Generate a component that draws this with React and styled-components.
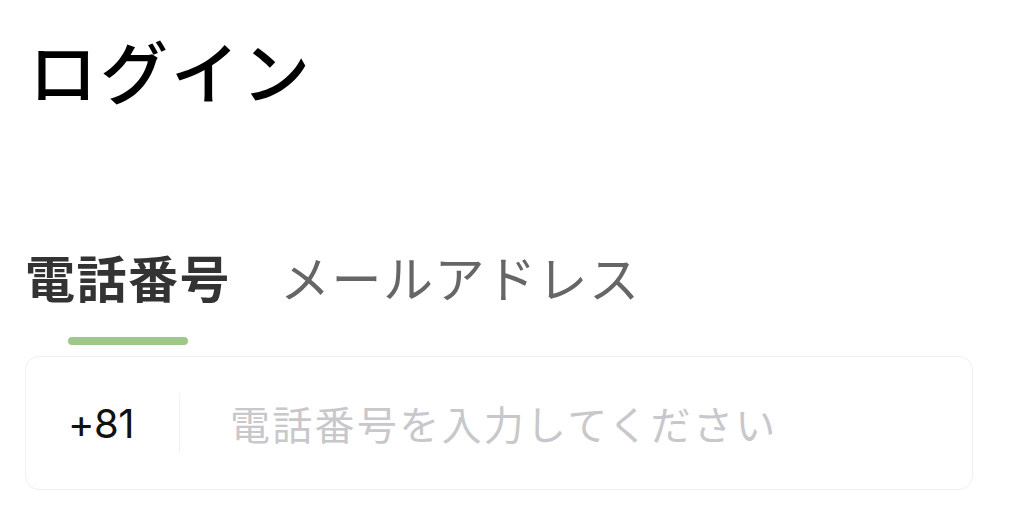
import React from "react";
import styled, { createGlobalStyle } from "styled-components";

const Global = createGlobalStyle`
  html, body { margin: 0; padding: 0; background: #ffffff; }
  body { font-family: "Noto Sans CJK JP", "Noto Sans", sans-serif; }
  * { box-sizing: border-box; }
`;

const Page = styled.div`
  width: 1024px;
  height: 523px;
  overflow: hidden;
  padding: 0 51px 0 25px;
  display: flex;
  flex-direction: column;
`;

const Title = styled.h1`
  margin: 22px 0 0 4px;
  font-size: 68px;
  line-height: 96px;
  font-weight: 500;
  color: #000;
  letter-spacing: 3px;
`;

const Tabs = styled.div`
  display: flex;
  gap: 49px;
  margin-top: 126px;
`;

const Tab = styled.button`
  border: 0;
  background: none;
  padding: 0;
  display: flex;
  flex-direction: column;
  align-items: center;
  font-family: inherit;
  font-size: 50px;
  line-height: 64px;
  letter-spacing: 1.5px;
  font-weight: ${(p) => (p.$active ? 700 : 400)};
  color: ${(p) => (p.$active ? "#333333" : "#666666")};
  cursor: pointer;
`;

const Indicator = styled.span`
  margin-top: 29px;
  width: 120px;
  height: 8px;
  border-radius: 4px;
  background: ${(p) => (p.$active ? "#a0c78a" : "transparent")};
`;

const Field = styled.div`
  margin-top: 11px;
  height: 134px;
  border: 1px solid #f0f0f0;
  border-radius: 14px;
  display: flex;
  align-items: center;
`;

const Code = styled.span`
  width: 153px;
  padding-left: 42px;
  font-family: "Inter", "Noto Sans", sans-serif;
  font-size: 40px;
  color: #111;
  letter-spacing: -0.5px;
`;

const Divider = styled.span`
  width: 1px;
  height: 60px;
  background: #f2f2f2;
`;

const Input = styled.input`
  flex: 1;
  margin-left: 50px;
  border: 0;
  outline: none;
  background: transparent;
  font-family: "Noto Sans CJK JP", sans-serif;
  font-size: 40px;
  letter-spacing: 2.3px;
  color: #333;
  padding: 0;
  &::placeholder { color: #c8c8cc; }
`;

export default function App() {
  return (
    <>
      <Global />
      <Page>
        <Title>ログイン</Title>
        <Tabs>
          <Tab $active>
            電話番号
            <Indicator $active />
          </Tab>
          <Tab>
            メールアドレス
            <Indicator />
          </Tab>
        </Tabs>
        <Field>
          <Code>+81</Code>
          <Divider />
          <Input placeholder="電話番号を入力してください" />
        </Field>
      </Page>
    </>
  );
}
